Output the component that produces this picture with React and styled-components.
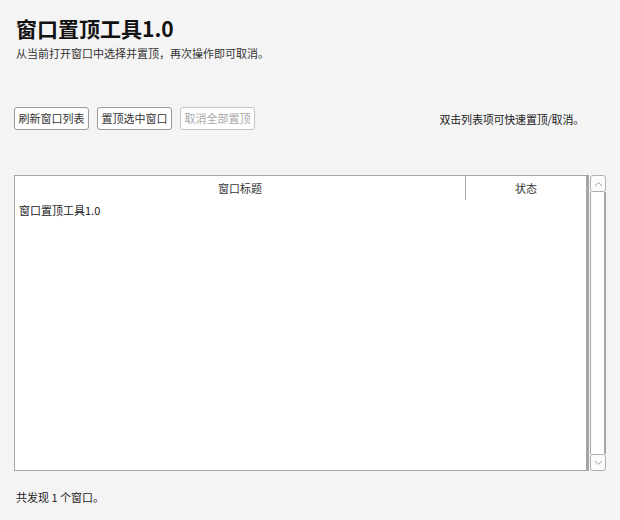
import React from "react";
import styled, { createGlobalStyle } from "styled-components";

const Global = createGlobalStyle`
  html, body { margin: 0; padding: 0; background: #f4f4f4; }
  body { font-family: "Noto Sans CJK SC", "Noto Sans", sans-serif; color: #222; }
`;

const Page = styled.div`
  width: 620px;
  height: 520px;
  box-sizing: border-box;
  padding: 13px 14px 0 14px;
  display: flex;
  flex-direction: column;
  background: #f4f4f4;
`;

const Title = styled.h1`
  margin: 0 0 0 2px;
  font-size: 21px;
  line-height: 30px;
  font-weight: 700;
  color: #111;
`;

const Subtitle = styled.p`
  margin: 2px 0 0 2px;
  font-size: 11px;
  line-height: 16px;
  color: #333;
`;

const Toolbar = styled.div`
  margin-top: 46px;
  display: flex;
  align-items: center;
  justify-content: space-between;
`;

const ButtonGroup = styled.div`
  display: flex;
  gap: 8px;
`;

const Button = styled.button`
  height: 23px;
  padding: 0 3.5px;
  font-family: inherit;
  font-size: 11px;
  line-height: 21px;
  background: #fff;
  color: ${(p) => (p.disabled ? "#a8a8a8" : "#333")};
  border: 1px solid ${(p) => (p.disabled ? "#c4c4c4" : "#9a9a9a")};
  border-radius: 3px;
  cursor: default;
`;

const Hint = styled.span`
  font-size: 11px;
  color: #222;
  margin-right: 22px;
  letter-spacing: -0.2px;
`;

const TableArea = styled.div`
  margin-top: 45px;
  display: flex;
  height: 296px;
`;

const Table = styled.div`
  width: 575px;
  box-sizing: border-box;
  background: #fff;
  border: 1px solid #a6a6a6;
  border-right: 3px solid #a6a6a6;
  display: flex;
  flex-direction: column;
`;

const HeaderRow = styled.div`
  display: flex;
  height: 24px;
`;

const HeaderCell = styled.div`
  width: ${(p) => p.w}px;
  flex: ${(p) => (p.grow ? 1 : "none")};
  text-align: center;
  font-size: 11px;
  line-height: 24px;
  color: #333;
  border-right: ${(p) => (p.sep ? "1px solid #a6a6a6" : "none")};
`;

const Row = styled.div`
  padding-left: 4px;
  font-size: 11px;
  line-height: 20px;
  color: #222;
`;

const Scrollbar = styled.div`
  width: 17px;
  display: flex;
  flex-direction: column;
`;

const ArrowButton = styled.div`
  height: 17px;
  margin-left: 1px;
  box-sizing: border-box;
  border: 1px solid #b0b0b0;
  border-radius: 3px;
  background: #fbfbfb;
  display: flex;
  align-items: center;
  justify-content: center;
`;

const Track = styled.div`
  flex: 1;
  margin-left: 1px;
  box-sizing: border-box;
  background: #fff;
  border-left: 1px solid #a6a6a6;
  border-right: 2px solid #a6a6a6;
`;

const Footer = styled.div`
  margin-top: 18px;
  margin-left: 2px;
  font-size: 11px;
  color: #222;
`;

const Chevron = ({ up }) => (
  <svg width="9" height="6" viewBox="0 0 9 6">
    <path
      d={up ? "M1 5 L4.5 1.5 L8 5" : "M1 1 L4.5 4.5 L8 1"}
      fill="none"
      stroke="#a0a0a0"
      strokeWidth="1"
    />
  </svg>
);

export default function App() {
  return (
    <>
      <Global />
      <Page>
        <Title>窗口置顶工具1.0</Title>
        <Subtitle>从当前打开窗口中选择并置顶，再次操作即可取消。</Subtitle>
        <Toolbar>
          <ButtonGroup>
            <Button>刷新窗口列表</Button>
            <Button>置顶选中窗口</Button>
            <Button disabled>取消全部置顶</Button>
          </ButtonGroup>
          <Hint>双击列表项可快速置顶/取消。</Hint>
        </Toolbar>
        <TableArea>
          <Table>
            <HeaderRow>
              <HeaderCell w={450} sep>窗口标题</HeaderCell>
              <HeaderCell grow>状态</HeaderCell>
            </HeaderRow>
            <Row>窗口置顶工具1.0</Row>
          </Table>
          <Scrollbar>
            <ArrowButton><Chevron up /></ArrowButton>
            <Track />
            <ArrowButton><Chevron /></ArrowButton>
          </Scrollbar>
        </TableArea>
        <Footer>共发现 1 个窗口。</Footer>
      </Page>
    </>
  );
}
